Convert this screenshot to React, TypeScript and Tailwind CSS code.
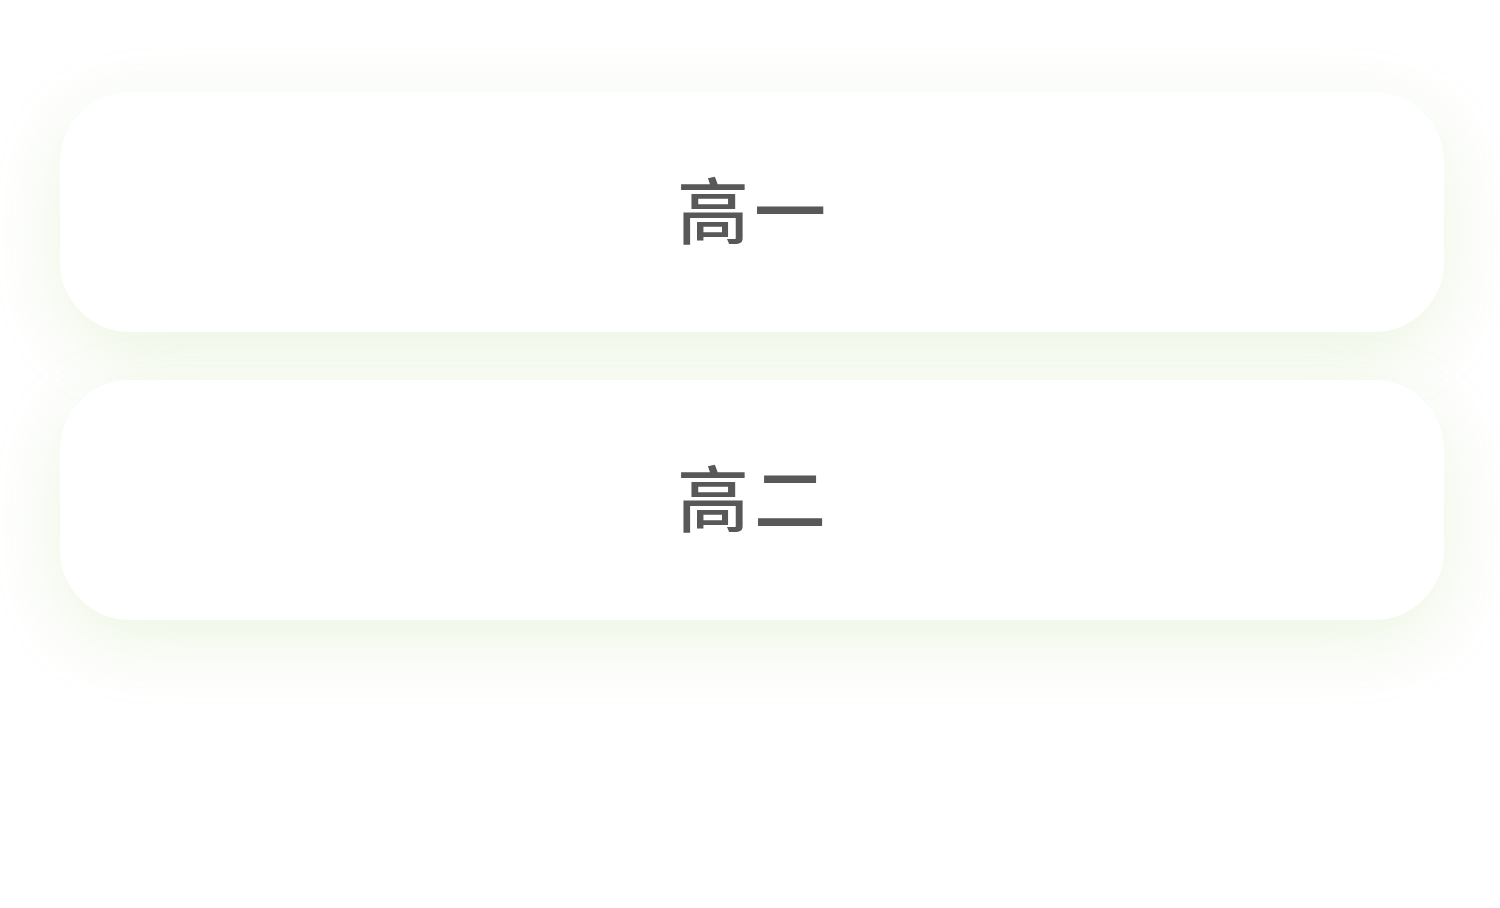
export default function App() {
  const grades = ["高一", "高二"];

  return (
    <div className="min-h-[908px] w-full bg-white pl-[60px] pr-[56px] pt-[92px]">
      <div className="flex flex-col gap-[48px]">
        {grades.map((g) => (
          <div
            key={g}
            className="flex h-[240px] items-center justify-center rounded-[70px] bg-white pb-[10px] pl-[4px] shadow-[0_20px_70px_rgba(139,195,74,0.16)]"
          >
            <span
              className="text-[72px] font-medium leading-none tracking-[5px] text-[#585858]"
              style={{ fontFamily: '"Noto Sans CJK SC", "Noto Sans", sans-serif' }}
            >
              {g}
            </span>
          </div>
        ))}
      </div>
    </div>
  );
}
